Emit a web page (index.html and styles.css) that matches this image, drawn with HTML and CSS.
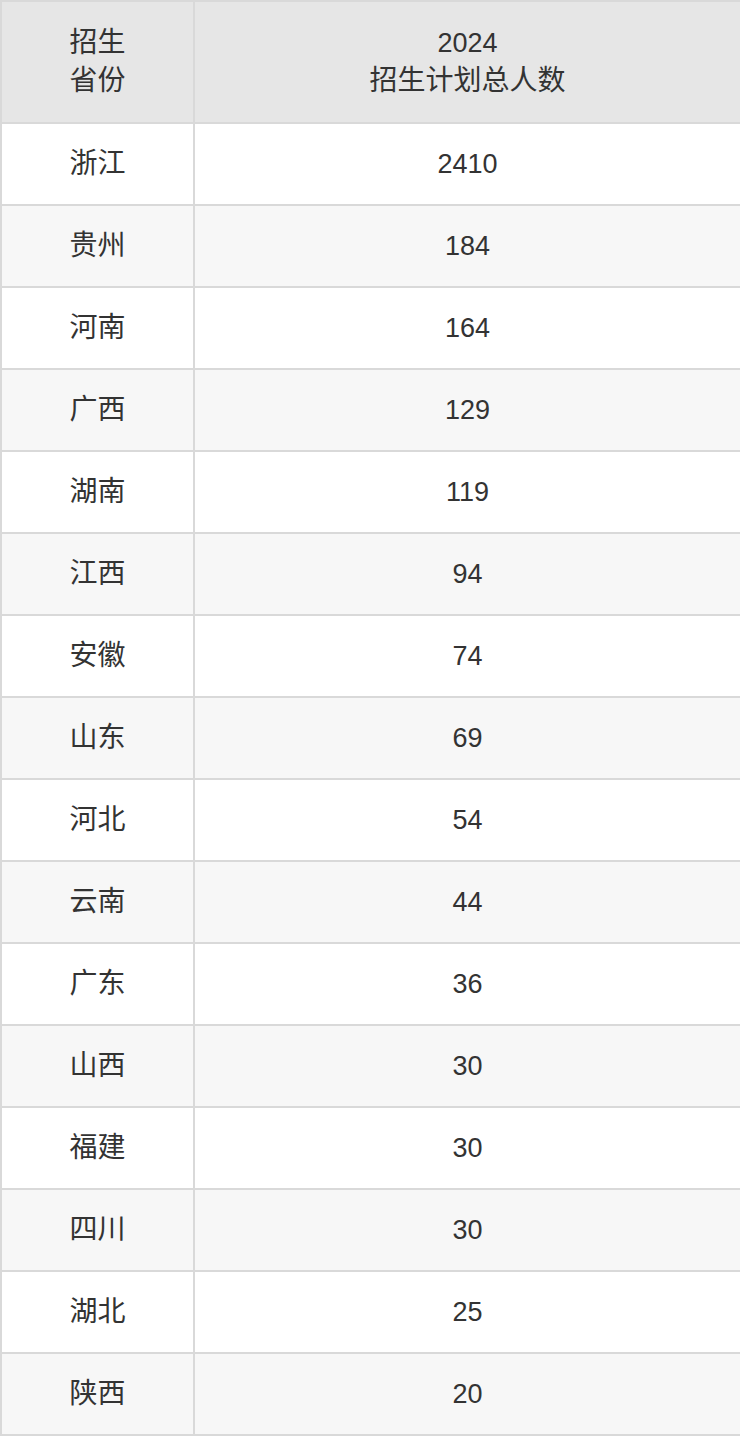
FILE: index.html
```html
<!DOCTYPE html>
<html lang="zh">
<head>
<meta charset="utf-8">
<link rel="stylesheet" href="styles.css">
</head>
<body>
<table class="plan">
  <colgroup><col class="c1"><col class="c2"></colgroup>
  <thead>
    <tr><th>招生<br>省份</th><th><span class="num">2024</span><br>招生计划总人数</th></tr>
  </thead>
  <tbody>
    <tr><td>浙江</td><td class="num">2410</td></tr>
    <tr><td>贵州</td><td class="num">184</td></tr>
    <tr><td>河南</td><td class="num">164</td></tr>
    <tr><td>广西</td><td class="num">129</td></tr>
    <tr><td>湖南</td><td class="num">119</td></tr>
    <tr><td>江西</td><td class="num">94</td></tr>
    <tr><td>安徽</td><td class="num">74</td></tr>
    <tr><td>山东</td><td class="num">69</td></tr>
    <tr><td>河北</td><td class="num">54</td></tr>
    <tr><td>云南</td><td class="num">44</td></tr>
    <tr><td>广东</td><td class="num">36</td></tr>
    <tr><td>山西</td><td class="num">30</td></tr>
    <tr><td>福建</td><td class="num">30</td></tr>
    <tr><td>四川</td><td class="num">30</td></tr>
    <tr><td>湖北</td><td class="num">25</td></tr>
    <tr><td>陕西</td><td class="num">20</td></tr>
  </tbody>
</table>
</body>
</html>
```
FILE: styles.css
```css
html, body { margin: 0; padding: 0; background: #fff; }
.plan {
  width: 740px;
  border-collapse: collapse;
  table-layout: fixed;
  font-family: "Liberation Sans", "Noto Sans CJK SC", sans-serif;
  font-size: 28px;
  color: #333;
}
.plan .c1 { width: 193px; }
.plan .c2 { width: 547px; }
.plan th, .plan td {
  border: 2px solid #d9d9d9;
  text-align: center;
  vertical-align: middle;
  padding: 0;
  font-weight: normal;
}
.plan th {
  background: #e6e6e6;
  height: 120px;
  line-height: 38px;
}
.plan td { height: 80px; line-height: 30px; }
.plan .num { font-size: 27px; }
.plan tbody tr:nth-child(even) td { background: #f7f7f7; }
```
